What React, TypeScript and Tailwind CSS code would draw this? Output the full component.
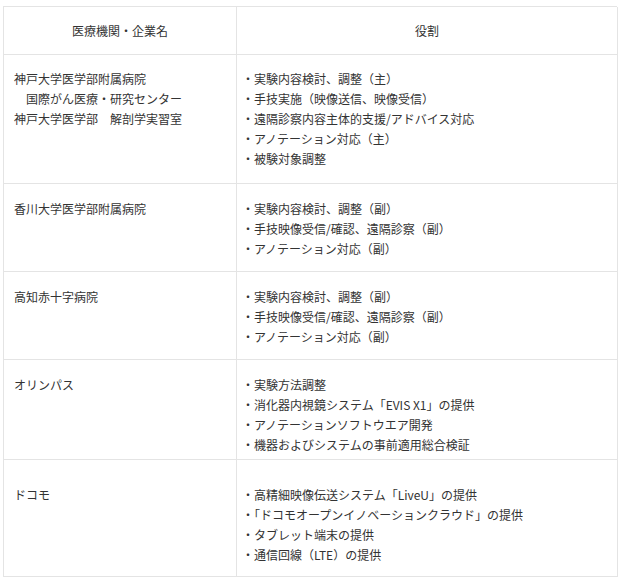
import React from "react";

type Row = { name: string[]; roles: string[]; h: string; pt: string };

const rows: Row[] = [
  {
    name: ["神戸大学医学部附属病院", "　国際がん医療・研究センター", "神戸大学医学部　解剖学実習室"],
    roles: [
      "・実験内容検討、調整（主）",
      "・手技実施（映像送信、映像受信）",
      "・遠隔診察内容主体的支援/アドバイス対応",
      "・アノテーション対応（主）",
      "・被験対象調整",
    ],
    h: "h-[129px]",
    pt: "pt-[14px]",
  },
  {
    name: ["香川大学医学部附属病院"],
    roles: ["・実験内容検討、調整（副）", "・手技映像受信/確認、遠隔診察（副）", "・アノテーション対応（副）"],
    h: "h-[88px]",
    pt: "pt-[15px]",
  },
  {
    name: ["高知赤十字病院"],
    roles: ["・実験内容検討、調整（副）", "・手技映像受信/確認、遠隔診察（副）", "・アノテーション対応（副）"],
    h: "h-[88px]",
    pt: "pt-[15px]",
  },
  {
    name: ["オリンパス"],
    roles: [
      "・実験方法調整",
      "・消化器内視鏡システム「EVIS X1」の提供",
      "・アノテーションソフトウエア開発",
      "・機器およびシステムの事前適用総合検証",
    ],
    h: "h-[100px]",
    pt: "pt-[15px]",
  },
  {
    name: ["ドコモ"],
    roles: [
      "・高精細映像伝送システム「LiveU」の提供",
      "・「ドコモオープンイノベーションクラウド」の提供",
      "・タブレット端末の提供",
      "・通信回線（LTE）の提供",
    ],
    h: "h-[117px]",
    pt: "pt-[25px]",
  },
];

export default function App() {
  return (
    <div className="w-[620px] h-[578px] bg-white overflow-hidden pt-[6px] pl-[3px]">
      <div
        className="w-[614px] grid grid-cols-[233px_381px] border-t border-l border-[#e4e4e4] text-[12px] leading-[20px] text-[#333333]"
        style={{ fontFamily: '"Noto Sans CJK JP", "Noto Sans", sans-serif' }}
      >
        <div className="h-[48px] border-r border-b border-[#e4e4e4] flex items-center justify-center">
          医療機関・企業名
        </div>
        <div className="h-[48px] border-r border-b border-[#e4e4e4] flex items-center justify-center">
          役割
        </div>
        {rows.map((r, i) => (
          <React.Fragment key={i}>
            <div className={`${r.h} ${r.pt} pl-[10px] border-r border-b border-[#e4e4e4]`}>
              {r.name.map((n, j) => (
                <div key={j} className="whitespace-pre">{n}</div>
              ))}
            </div>
            <div className={`${r.h} ${r.pt} pl-[5px] border-r border-b border-[#e4e4e4]`}>
              {r.roles.map((n, j) => (
                <div key={j} className="whitespace-pre">{n}</div>
              ))}
            </div>
          </React.Fragment>
        ))}
      </div>
    </div>
  );
}
